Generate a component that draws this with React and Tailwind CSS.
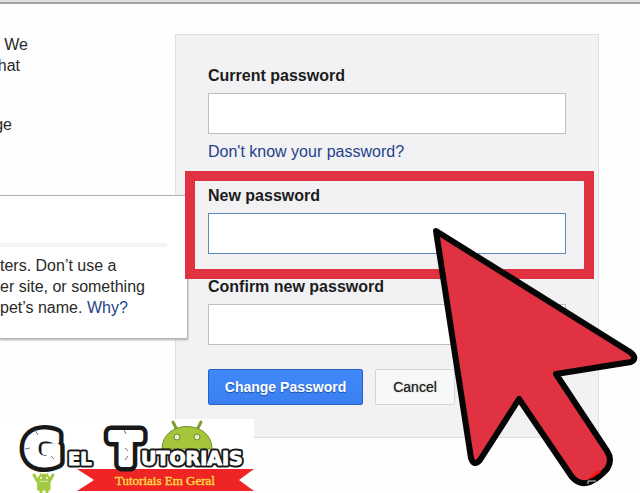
import React from "react";

function Field({ id, label, focused, children }) {
  return (
    <div className="relative flex flex-col">
      <label htmlFor={id} className="mb-[7px] text-[16px] leading-5 font-bold text-[#1c1c1c]">
        {label}
      </label>
      <input
        id={id}
        type="password"
        className={
          focused
            ? "h-[41px] w-full border border-[#5f86bd] bg-white px-2 outline-none"
            : "h-[41px] w-full border border-[#bfbfc2] bg-white px-2 outline-none"
        }
      />
      {children}
    </div>
  );
}

function Arrow() {
  return (
    <svg className="pointer-events-none absolute top-[220px] left-[420px] z-30" width="220" height="273" viewBox="420 220 220 273" aria-hidden="true">
      <path
        d="M436 231 L630 352 Q638 358 631 362 L556 374 L607 451 Q613 460 607 469 Q599 478 590 482 Q580 486 572 477 L519 399 L480 460 Q474 467 471 458 Z"
        fill="#e03241"
        stroke="#050505"
        strokeWidth="6"
        strokeLinejoin="round"
      />
      <path d="M587 480 L598 470 L601 472 L594 477 Z" fill="#ff1010" />
      <path d="M588 484 V481 H596" fill="none" stroke="#ddd" strokeWidth="1" />
    </svg>
  );
}

function LogoWord({ x, y, size, children, outline, puff }) {
  const shared = {
    x,
    y,
    fontSize: size,
    fontWeight: 700,
    fontFamily: "DejaVu Sans, sans-serif",
    strokeLinejoin: "round",
  };
  return (
    <>
      <text {...shared} fill="#181818" stroke="#181818" strokeWidth={outline} aria-hidden="true">{children}</text>
      <text {...shared} fill="#fff" stroke="#fff" strokeWidth={puff}>{children}</text>
    </>
  );
}

function Logo() {
  return (
    <div className="absolute top-[419px] left-0 z-20 bg-white">
      <svg className="block" width="254" height="74" viewBox="0 419 254 74">
        <path d="M173 422 l5 10 M201 422 l-5 10" stroke="#7f9d32" strokeWidth="3" strokeLinecap="round" />
        <path d="M162 449 C162 419 212 419 212 449 Z" fill="#a5c63b" stroke="#75902c" strokeWidth="1" />
        <circle cx="177" cy="437" r="3" fill="#e5edcf" stroke="#6f8930" />
        <circle cx="197" cy="437" r="3" fill="#e5edcf" stroke="#6f8930" />
        <g fill="#a2c840" stroke="#a2c840" strokeLinecap="round">
          <path d="M34 475 l4 7 M53 475 l-4 7" strokeWidth="3" />
          <path d="M38 480 Q38 474 44 474 Q50 474 50 480 Z" strokeWidth="1" />
          <path d="M38 482 H50 V490 H38 Z" strokeWidth="1" />
          <path d="M41 490 V492 M47 490 V492" strokeWidth="3" />
          <path d="M40 473 l1 2 M48 473 l-1 2" strokeWidth="1" />
        </g>
        <circle cx="41" cy="478" r="1" fill="#fff" />
        <circle cx="47" cy="478" r="1" fill="#fff" />
        <path d="M77 469 H254 L239 480 L254 491 H77 L94 480 Z" fill="#ee2524" />
        <LogoWord x="25" y="464" size="43" outline="15" puff="6">G</LogoWord>
        <LogoWord x="68" y="465" size="18" outline="5" puff="1">EL</LogoWord>
        <LogoWord x="111" y="464" size="43" outline="15" puff="6">T</LogoWord>
        <LogoWord x="141" y="465" size="19" outline="5" puff="1">UTORIAIS</LogoWord>
        <path d="M35 430 l3 5 M25 449 l5 -1 M51 456 l3 3 M124 430 l2 4 M125 448 l3 3 M125 460 l3 -4" fill="none" stroke="#777" strokeWidth="1" />
        <text x="115" y="485" fill="#ffe451" stroke="#ffd040" strokeWidth="0.4" fontSize="13" fontFamily="Liberation Serif, serif">Tutoriais Em Geral</text>
      </svg>
    </div>
  );
}

export default function App() {
  return (
    <div className="relative min-h-screen overflow-hidden bg-[#fefefe] font-['Liberation_Sans',Arial,sans-serif] text-[16px] text-[#2a2a2a]">
      <header className="h-1 border-t-2 border-b-2 border-t-[#dedee0] border-b-[#a2a2a6]" />
      <main className="flex pr-[41px]">
        <aside className="w-[175px] shrink-0 overflow-hidden pt-[30px]">
          <p className="flex flex-col items-start leading-[21px]">
            <span className="flex w-7 justify-end">We</span>
            <span className="flex w-5 justify-end">hat</span>
          </p>
          <p className="mt-[38px] flex w-3 justify-end leading-[21px]">ge</p>
        </aside>

        <form
          className="mt-[30px] flex-1 border border-[#dfdfe1] bg-[#f2f2f4] pt-[31px] pr-8 pb-8 pl-8"
          onSubmit={(e) => e.preventDefault()}
        >
          <Field id="current" label="Current password" />
          <a href="#recover" className="mt-2 block leading-5 text-[#1f4189]">
            Don't know your password?
          </a>
          <div className="mt-6">
            <Field id="new" label="New password" focused>
              <div className="pointer-events-none absolute -top-[15px] -right-7 -bottom-[25px] -left-[23px] z-20 border-10 border-[#e03241]" />
            </Field>
          </div>
          <div className="mt-[23px]">
            <Field id="confirm" label="Confirm new password" />
          </div>
          <div className="mt-6 flex gap-3">
            <button
              type="submit"
              className="h-9 w-[155px] shrink-0 rounded-[2px] border border-[#2460c8] bg-linear-to-b from-[#4089fb] to-[#3a7ff0] text-[14px] font-bold text-white [text-shadow:0_1px_1px_#1d4e9c]"
            >
              Change Password
            </button>
            <button
              type="button"
              className="h-9 w-20 shrink-0 rounded-[2px] border border-[#d5d5d7] bg-[#f8f8f9] text-[14px] text-[#222] [text-shadow:0_0_1px_#666]"
            >
              Cancel
            </button>
          </div>
        </form>
      </main>

      <div className="absolute top-[195px] left-0 z-10 w-[188px] border border-l-0 border-[#b4b4b8] bg-white pt-[47px] pb-5 shadow-[0_1px_2px_#aaa]">
        <hr className="mr-5 border-t-4 border-[#f3f3f4]" />
        <p className="mt-2 leading-[21px] whitespace-nowrap">
          ters. Don’t use a
          <br />
          er site, or something
          <br />
          pet’s name. <a href="#why" className="text-[#1f4189]">Why?</a>
        </p>
      </div>

      <Logo />
      <Arrow />
    </div>
  );
}
